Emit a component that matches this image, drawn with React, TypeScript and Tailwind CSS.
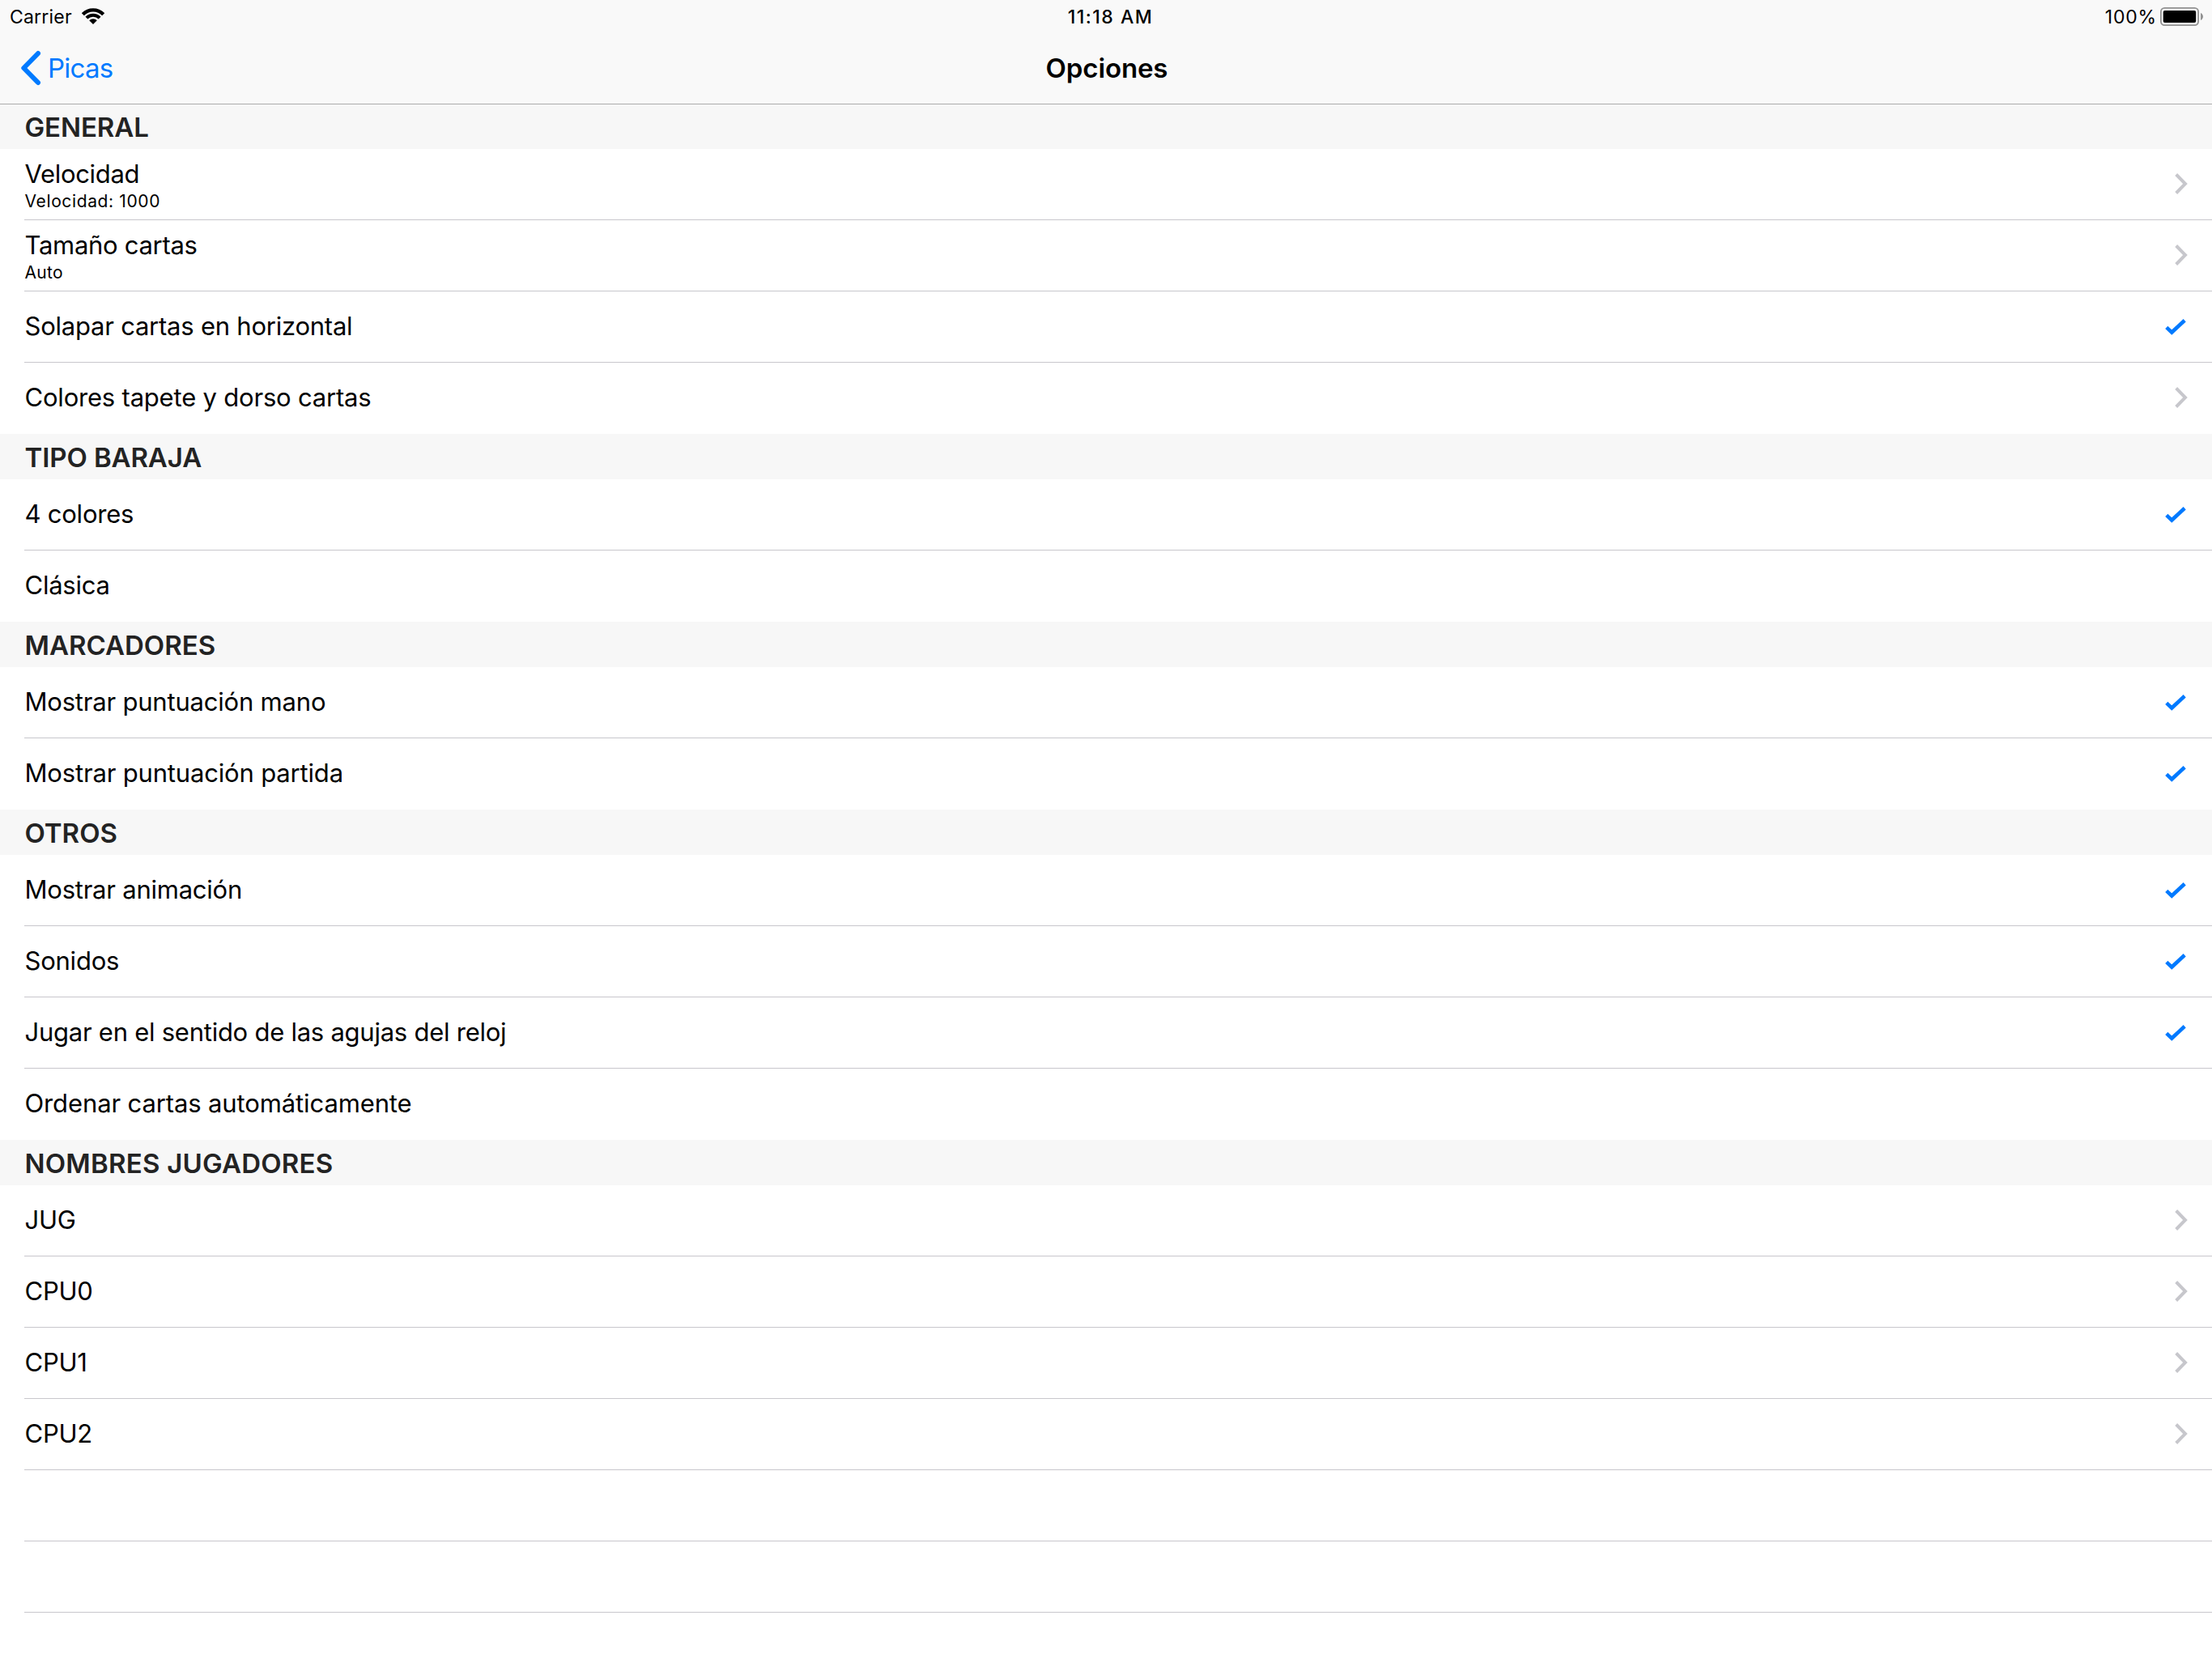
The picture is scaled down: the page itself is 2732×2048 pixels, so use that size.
import React from "react";
import clsx from "clsx";

type Row = {
  title: string;
  detail?: string;
  accessory?: "chevron" | "check";
  titleClass?: string;
  detailClass?: string;
};

type Section = {
  name: string;
  nameClass?: string;
  rows: Row[];
};

const sections: Section[] = [
  {
    name: "GENERAL",
    nameClass: "tracking-[-0.1px]",
    rows: [
      {
        title: "Velocidad",
        detail: "Velocidad: 1000",
        accessory: "chevron",
        titleClass: "tracking-[-0.32px]",
        detailClass: "tracking-[0.63px]",
      },
      {
        title: "Tamaño cartas",
        detail: "Auto",
        accessory: "chevron",
        titleClass: "tracking-[-0.3px]",
        detailClass: "tracking-[0.3px]",
      },
      { title: "Solapar cartas en horizontal", accessory: "check" },
      {
        title: "Colores tapete y dorso cartas",
        accessory: "chevron",
        titleClass: "tracking-[-0.2px]",
      },
    ],
  },
  {
    name: "TIPO BARAJA",
    nameClass: "tracking-[-0.1px]",
    rows: [{ title: "4 colores", accessory: "check" }, { title: "Clásica" }],
  },
  {
    name: "MARCADORES",
    rows: [
      { title: "Mostrar puntuación mano", accessory: "check", titleClass: "tracking-[-0.2px]" },
      { title: "Mostrar puntuación partida", accessory: "check", titleClass: "tracking-[-0.17px]" },
    ],
  },
  {
    name: "OTROS",
    rows: [
      { title: "Mostrar animación", accessory: "check" },
      { title: "Sonidos", accessory: "check" },
      {
        title: "Jugar en el sentido de las agujas del reloj",
        accessory: "check",
        titleClass: "tracking-[-0.25px]",
      },
      { title: "Ordenar cartas automáticamente", titleClass: "tracking-[-0.12px]" },
    ],
  },
  {
    name: "NOMBRES JUGADORES",
    nameClass: "tracking-[0.22px]",
    rows: [
      { title: "JUG", accessory: "chevron" },
      { title: "CPU0", accessory: "chevron" },
      { title: "CPU1", accessory: "chevron" },
      { title: "CPU2", accessory: "chevron" },
    ],
  },
];

const WifiIcon = () => (
  <svg width="28" height="20" viewBox="0 0 28 20" fill="none">
    <path d="M1.3 7.7A17.7 17.7 0 0 1 26.7 7.7" stroke="#000" strokeWidth="4.4" />
    <path d="M5.9 12.2A11.3 11.3 0 0 1 22.1 12.2" stroke="#000" strokeWidth="4" />
    <path d="M14 20L9.2 15.3A6.7 6.7 0 0 1 18.8 15.3Z" fill="#000" />
  </svg>
);

const BatteryIcon = () => (
  <svg width="53" height="23" viewBox="0 0 53 23" fill="none">
    <rect x="0.9" y="0.9" width="46.2" height="21.2" rx="4.6" stroke="#929292" strokeWidth="1.8" />
    <rect x="3.7" y="4" width="40.5" height="15" rx="2" fill="#000" />
    <path d="M50 7C52 8 53 9.6 53 11.5S52 15 50 16Z" fill="#929292" />
  </svg>
);

const BackIcon = () => (
  <svg width="25" height="44" viewBox="0 0 25 44" fill="none">
    <path
      d="M21 4L3.3 22L21 40"
      stroke="#007aff"
      strokeWidth="6"
      strokeLinecap="round"
      strokeLinejoin="round"
    />
  </svg>
);

const ChevronIcon = () => (
  <svg className="mt-[30px] mr-[30px]" width="16" height="26" viewBox="0 0 16 26" fill="none">
    <path d="M1.7 1.5L13 13L1.7 24.5" stroke="#c7c7cc" strokeWidth="4" />
  </svg>
);

const CheckIcon = () => (
  <svg className="mt-[34px] mr-8" width="26" height="20" viewBox="0 0 26 20" fill="none">
    <path d="M1.8 10.4L8.3 16.5L24.2 1.8" stroke="#007aff" strokeWidth="4.6" />
  </svg>
);

const SettingRow = ({ row, separator }: { row: Row; separator: boolean }) => (
  <div
    className={clsx(
      "ml-[30px] flex h-[88px] items-start justify-between",
      separator && "border-b border-[#c8c7cc]"
    )}
  >
    <div className={row.detail ? "pt-3" : "pt-6"}>
      <p
        className={clsx(
          "pl-[0.5px] text-[31px] leading-[38px] whitespace-nowrap",
          row.titleClass ?? "tracking-[-0.23px]"
        )}
      >
        {row.title}
      </p>
      {row.detail && (
        <p className={clsx("pl-[0.5px] text-[21px] leading-[30px]", row.detailClass)}>
          {row.detail}
        </p>
      )}
    </div>
    {row.accessory === "chevron" && <ChevronIcon />}
    {row.accessory === "check" && <CheckIcon />}
  </div>
);

const App = () => {
  return (
    <div className="h-screen w-full overflow-hidden bg-white font-['Inter',sans-serif] text-black">
      {/* Status bar */}
      <div className="grid h-10 grid-cols-3 items-center bg-[#f9f9f9] pr-[11px] pl-3 text-[23px] leading-10">
        <div className="flex items-center gap-3">
          <span className="pt-0.5 leading-[38px] tracking-[0.2px]">Carrier</span>
          <WifiIcon />
        </div>
        <span className="pt-0.5 pl-[10px] text-center leading-[38px] font-medium tracking-[1.5px]">
          11:18 AM
        </span>
        <div className="flex items-center justify-end gap-1">
          <span className="pt-0.5 leading-[38px] tracking-[0.8px]">100%</span>
          <BatteryIcon />
        </div>
      </div>

      {/* Navigation bar */}
      <div className="grid h-[88px] grid-cols-3 items-center bg-[#f9f9f9] px-[26px] text-[33px]">
        <button type="button" className="flex items-center gap-2 text-[#007aff]">
          <BackIcon />
          <span className="pt-0.5 tracking-[-0.75px]">Picas</span>
        </button>
        <h1 className="pt-0.5 pl-0.5 text-center font-semibold tracking-[-0.12px]">Opciones</h1>
      </div>

      {sections.map((section, i) => (
        <section key={section.name}>
          <h2
            className={clsx(
              "h-14 bg-[#f7f7f7] pl-[30.5px] text-[33px] font-semibold text-[#232323]",
              i === 0 ? "border-t border-[#acacac] leading-[56px]" : "leading-[58px]",
              section.nameClass
            )}
          >
            {section.name}
          </h2>
          {section.rows.map((row, j) => (
            <SettingRow
              key={row.title}
              row={row}
              separator={j < section.rows.length - 1 || i === sections.length - 1}
            />
          ))}
        </section>
      ))}

      {/* Empty rows */}
      <div className="ml-[30px] h-[88px] border-b border-[#c8c7cc]" />
      <div className="ml-[30px] h-[88px] border-b border-[#c8c7cc]" />
    </div>
  );
};

export default App;
